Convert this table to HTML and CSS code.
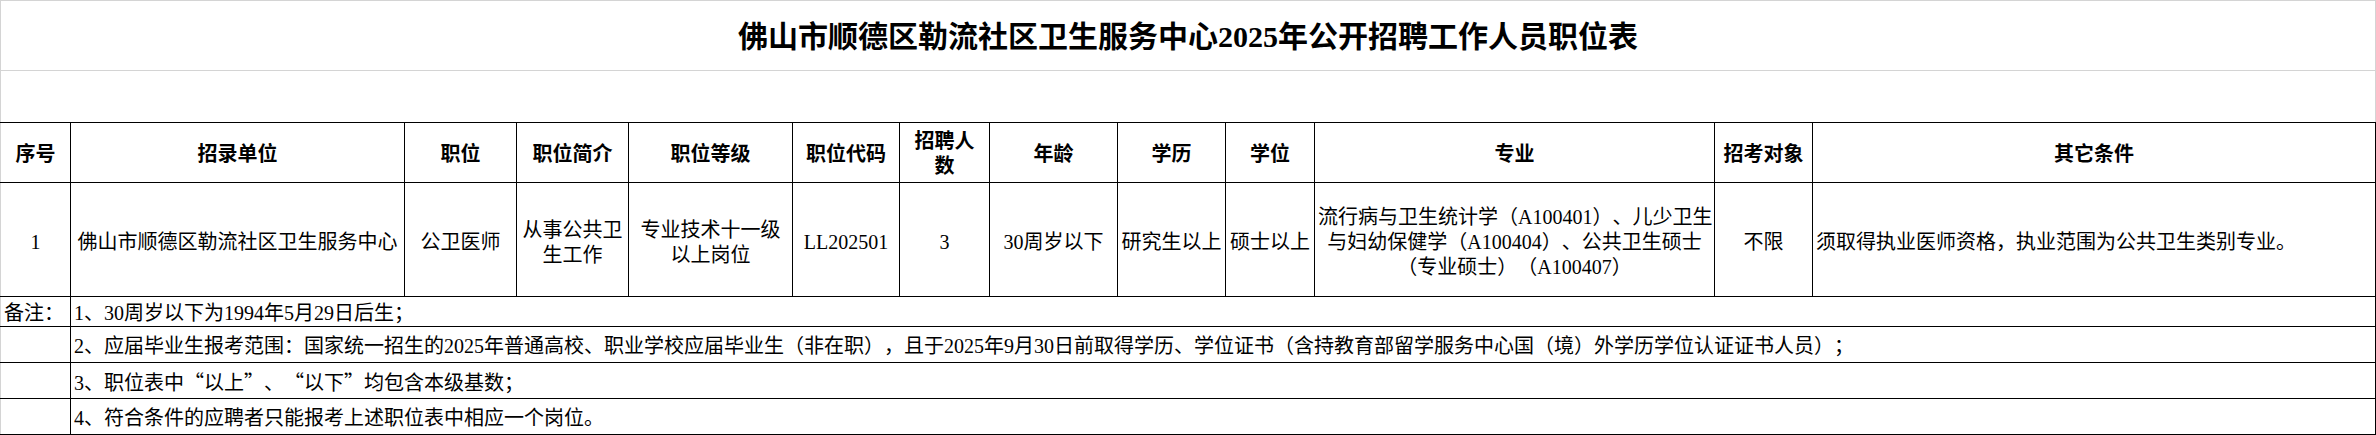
FILE: index.html
```html
<!DOCTYPE html>
<html lang="zh-CN">
<head>
<meta charset="utf-8">
<title>佛山市顺德区勒流社区卫生服务中心2025年公开招聘工作人员职位表</title>
<link rel="stylesheet" href="styles.css">
</head>
<body>
<table class="sheet">
  <colgroup>
    <col class="w-no">
    <col class="w-unit">
    <col class="w-post">
    <col class="w-brief">
    <col class="w-grade">
    <col class="w-code">
    <col class="w-num">
    <col class="w-age">
    <col class="w-edu">
    <col class="w-deg">
    <col class="w-major">
    <col class="w-target">
    <col class="w-other">
  </colgroup>
  <tr class="r-title">
    <td class="title" colspan="13">佛山市顺德区勒流社区卫生服务中心2025年公开招聘工作人员职位表</td>
  </tr>
  <tr class="r-blank">
    <td class="blank" colspan="13"></td>
  </tr>
  <tr class="r-head">
    <th class="edge">序号</th>
    <th>招录单位</th>
    <th>职位</th>
    <th>职位简介</th>
    <th>职位等级</th>
    <th>职位代码</th>
    <th>招聘人<br>数</th>
    <th>年龄</th>
    <th>学历</th>
    <th>学位</th>
    <th>专业</th>
    <th>招考对象</th>
    <th>其它条件</th>
  </tr>
  <tr class="r-data">
    <td class="edge">1</td>
    <td>佛山市顺德区勒流社区卫生服务中心</td>
    <td>公卫医师</td>
    <td>从事公共卫<br>生工作</td>
    <td>专业技术十一级<br>以上岗位</td>
    <td>LL202501</td>
    <td>3</td>
    <td>30周岁以下</td>
    <td>研究生以上</td>
    <td>硕士以上</td>
    <td>流行病与卫生统计学（A100401）、儿少卫生<br>与妇幼保健学（A100404）、公共卫生硕士<br>（专业硕士）（A100407）</td>
    <td>不限</td>
    <td class="left">须取得执业医师资格，执业范围为公共卫生类别专业。</td>
  </tr>
  <tr class="r-note1">
    <td class="edge left">备注：</td>
    <td class="left" colspan="12">1、30周岁以下为1994年5月29日后生；</td>
  </tr>
  <tr class="r-note">
    <td class="edge"></td>
    <td class="left" colspan="12">2、应届毕业生报考范围：国家统一招生的2025年普通高校、职业学校应届毕业生（非在职），且于2025年9月30日前取得学历、学位证书（含持教育部留学服务中心国（境）外学历学位认证证书人员）；</td>
  </tr>
  <tr class="r-note">
    <td class="edge"></td>
    <td class="left" colspan="12">3、职位表中<span class="cjk">“</span>以上<span class="cjk">”</span>、<span class="cjk">“</span>以下<span class="cjk">”</span>均包含本级基数；</td>
  </tr>
  <tr class="r-note">
    <td class="edge"></td>
    <td class="left" colspan="12">4、符合条件的应聘者只能报考上述职位表中相应一个岗位。</td>
  </tr>
</table>
</body>
</html>
```

FILE: styles.css
```css
html, body {
  margin: 0;
  padding: 0;
  background: #ffffff;
}

body {
  font-family: "Liberation Serif", "Noto Sans CJK SC", serif;
  color: #000000;
  text-spacing-trim: space-all;
}

.sheet {
  border-collapse: collapse;
  table-layout: fixed;
  width: 2376px;
}

.w-no { width: 70px; }
.w-unit { width: 334px; }
.w-post { width: 112px; }
.w-brief { width: 112px; }
.w-grade { width: 164px; }
.w-code { width: 107px; }
.w-num { width: 90px; }
.w-age { width: 128px; }
.w-edu { width: 108px; }
.w-deg { width: 89px; }
.w-major { width: 400px; }
.w-target { width: 98px; }
.w-other { width: 563px; }

.sheet td,
.sheet th {
  border: 1px solid #000000;
  padding: 0 3px;
  font-size: 20px;
  line-height: 25px;
  text-align: center;
  vertical-align: middle;
  white-space: nowrap;
  overflow: hidden;
  box-sizing: border-box;
  text-spacing-trim: space-all;
}

.sheet th {
  font-weight: bold;
  padding-top: 3px;
}

.sheet .edge {
  border-left-color: #d4d4d4;
}

.sheet .left {
  text-align: left;
}

.sheet .title {
  border: 1px solid #d4d4d4;
  font-size: 30px;
  font-weight: bold;
  line-height: 36px;
  padding-top: 2px;
}

.sheet .blank {
  border-top-color: #d4d4d4;
  border-left-color: #d4d4d4;
  border-right-color: #d4d4d4;
  border-bottom-color: #000000;
}

.r-title { height: 70px; }
.r-blank { height: 52px; }
.r-head { height: 60px; }
.r-data { height: 114px; }
.r-note1 { height: 30px; }
.r-note { height: 36px; }

.r-data td {
  padding-top: 6px;
}

.r-note1 td,
.r-note td {
  padding-top: 3px;
}

.cjk {
  font-family: "Noto Sans CJK SC", sans-serif;
}
```
